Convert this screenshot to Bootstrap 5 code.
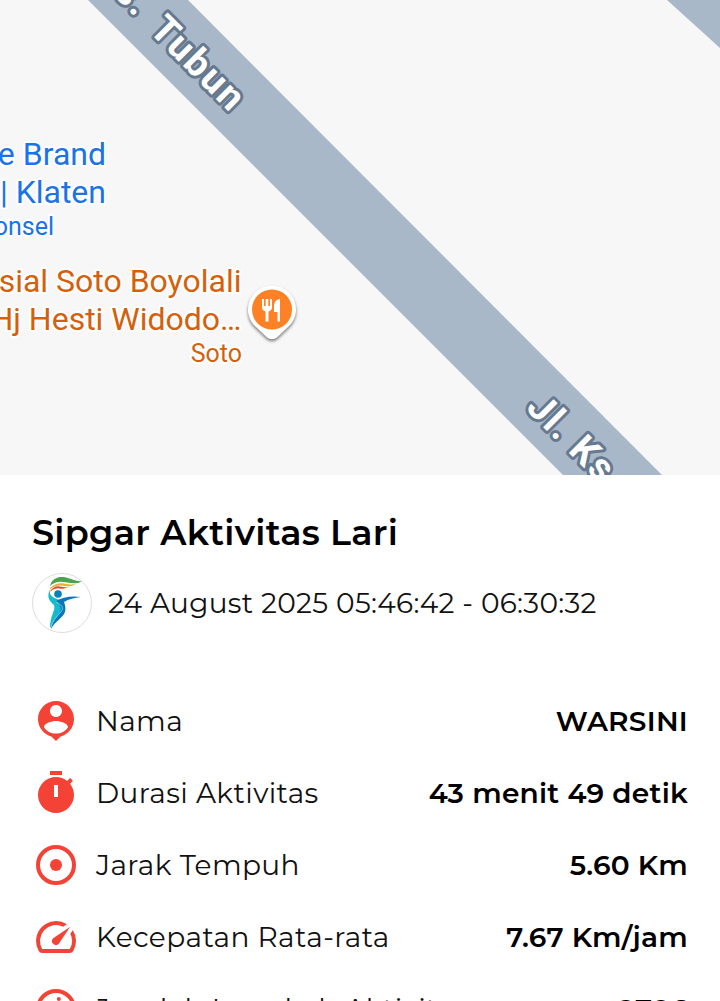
<!DOCTYPE html>
<html lang="id">
<head>
  <meta charset="UTF-8">
  <title>Sipgar Aktivitas Lari</title>
  <meta name="viewport" content="width=device-width, initial-scale=1">
  <!-- Bootstrap 5 -->
  <link href="https://cdn.jsdelivr.net/npm/bootstrap@5.3.0/dist/css/bootstrap.min.css" rel="stylesheet">

  <style>
    body {
      height: 1001px;
      overflow: hidden;
      background: #fff;
      color: #000;
      font-family: Montserrat, Inter, sans-serif;
    }

    .map-area {
      height: 475px;
      background: #f7f7f7;
    }

    .map-area svg text {
      font-family: Roboto, sans-serif;
      paint-order: stroke;
      stroke-linejoin: round;
    }

    .road-name {
      font-weight: 700;
      font-size: 38px;
      letter-spacing: 2px;
      fill: #fff;
      stroke: #66798f;
      stroke-width: 6px;
    }

    .poi {
      font-size: 32px;
      stroke: #fff;
      stroke-width: 4px;
    }

    .poi-sub {
      font-size: 25px;
    }

    .detail {
      padding: 35px 32px 0;
    }

    .activity-title {
      font-size: 35px;
      line-height: 46px;
      font-weight: 600;
      letter-spacing: .3px;
    }

    .activity-info {
      margin-top: 17px;
    }

    .avatar {
      width: 60px;
      height: 60px;
    }

    .activity-time {
      font-size: 28px;
      font-weight: 400;
      line-height: 36px;
      letter-spacing: .3px;
      color: #111;
    }

    .stats {
      margin-top: 52px;
    }

    .stat-row {
      height: 72px;
      font-size: 28px;
      letter-spacing: .25px;
      white-space: nowrap;
    }

    .stat-row svg {
      width: 48px;
      height: 48px;
      fill: #f44336;
      margin-right: 16px;
    }

    .stat-label {
      font-weight: 400;
      letter-spacing: .4px;
      color: #111;
    }

    .stat-value {
      font-weight: 600;
    }
  </style>
</head>
<body>
  <div class="map-area overflow-hidden">
    <svg class="d-block" width="720" height="475" viewBox="0 0 720 475">
      <path d="M88 0H188L662 475H563Z" fill="#a9b8c9"/>
      <path d="M667 0H720V48Z" fill="#a9b8c9"/>

      <text class="road-name" transform="translate(148 31) rotate(45)">Tubun</text>
      <text class="road-name" transform="translate(137 19) rotate(45)" text-anchor="end">Ks.</text>
      <text class="road-name" transform="translate(525 409) rotate(45)">Jl. Ks.</text>

      <g fill="#1a73e8" text-anchor="end">
        <text class="poi" x="106" y="165">Store Brand</text>
        <text class="poi" x="106" y="203">| Klaten</text>
        <text class="poi poi-sub" x="54" y="235">Toko Ponsel</text>
      </g>
      <g fill="#d55f0a" text-anchor="end">
        <text class="poi" x="241.500" y="292">Spesial Soto Boyolali</text>
        <text class="poi" x="241.500" y="330">Hj Hesti Widodo…</text>
        <text class="poi poi-sub" x="242" y="362">Soto</text>
      </g>

      <!-- restaurant pin -->
      <g style="filter: drop-shadow(0 2px 1.5px rgba(0,0,0,.5))">
        <path d="M272 285.500a24 24 0 0 0-24 24c0 8 3.500 13.500 8.500 18l10 9.500q5.500 4.500 11 0l10-9.500c5-4.500 8.500-10 8.500-18a24 24 0 0 0-24-24z" fill="#fff"/>
      </g>
      <circle cx="272" cy="309.500" r="20" fill="#ff8126"/>
      <path d="M262 299h2v7h1.700v-7h2.600v7h1.700v-7h2v8q0 3.500-3.500 4.500v10h-3v-10q-3.500-1-3.500-4.500zM280 299v22.500h-2.500v-9.500h-3.500v-6q0-6 6-7z" fill="#fff"/>
    </svg>
  </div>

  <main class="detail">
    <h1 class="activity-title mb-0">Sipgar Aktivitas Lari</h1>

    <div class="activity-info d-flex align-items-center gap-3">
      <svg class="avatar flex-shrink-0" viewBox="0 0 60 60">
        <circle cx="30" cy="30" r="29.500" fill="#fff" stroke="#ddd"/>
        <path d="M18 13C20 5 27 3 34 4.500c6 1.500 10 3.500 16 4-5 2.500-10 2-15 1-7-1.500-12-1-17 3.500z" fill="#48a54d"/>
        <path d="M18 15q6-6 14-4.500q6 1.500 12 .5q-5 3.500-11 2q-9-2-15 3.500z" fill="#f0ae2e"/>
        <path d="M18 18q5-6 10-4.500q4 1 8 .5q-4 2.500-8 1.500q-5-1-10 3z" fill="#df4636"/>
        <circle cx="26" cy="21" r="3.800" fill="#087fbd"/>
        <path d="M18 16.500c-4 8 0 12 4 15.500 1 2 0 5-1 8-2 5-3 9-3 15l6-9c4-5 8-10 8-14-1-4-4-5-7-6-5-2-8-4-7-9.500z" fill="#12bccd"/>
        <path d="M24 28c7-4 15-5.500 25-4-7 .8-12 2-17 5 1 3 2 6 1 10-3 7-10 9-14 17 1-7 4-10 7-14 4-5 4-8-2-14z" fill="#0878b8"/>
        <path d="M24 29c8 4 8 7 3 12q-5 5-8 12" fill="none" stroke="#a8e4ef" stroke-width=".7"/>
      </svg>
      <div class="activity-time">24 August 2025 05:46:42 - 06:30:32</div>
    </div>

    <div class="stats">
      <div class="stat-row d-flex align-items-center">
        <svg viewBox="0 0 24 24"><path d="M12 2c-4.970 0-9 4.030-9 9 0 4.170 2.840 7.670 6.690 8.690L12 22l2.310-2.310C18.160 18.670 21 15.170 21 11c0-4.970-4.030-9-9-9zm0 2c1.660 0 3 1.340 3 3s-1.340 3-3 3-3-1.340-3-3 1.340-3 3-3zm0 14.300c-2.500 0-4.710-1.280-6-3.220.030-1.990 4-3.080 6-3.080 1.990 0 5.970 1.090 6 3.080-1.290 1.940-3.500 3.220-6 3.220z"/></svg>
        <span class="stat-label">Nama</span>
        <span class="stat-value ms-auto">WARSINI</span>
      </div>
      <div class="stat-row d-flex align-items-center">
        <svg viewBox="0 0 24 24"><path d="M19.030 7.390l1.420-1.420c-.450-.510-.900-.970-1.410-1.410L17.620 5.980C16.070 4.740 14.120 4 12 4c-4.970 0-9 4.030-9 9s4.020 9 9 9 9-4.030 9-9c0-2.110-.740-4.060-1.970-5.610zM13 14h-2V8h2v6zm2-13H9v2h6V1z"/></svg>
        <span class="stat-label">Durasi Aktivitas</span>
        <span class="stat-value ms-auto">43 menit 49 detik</span>
      </div>
      <div class="stat-row d-flex align-items-center">
        <svg viewBox="0 0 24 24"><circle cx="12" cy="12" r="9" fill="none" stroke="#f44336" stroke-width="2"/><circle cx="12" cy="12" r="3"/></svg>
        <span class="stat-label">Jarak Tempuh</span>
        <span class="stat-value ms-auto">5.60 Km</span>
      </div>
      <div class="stat-row d-flex align-items-center">
        <svg viewBox="0 0 24 24"><path d="M20.380 8.570l-1.230 1.850a8 8 0 0 1-.220 7.580H5.070A8 8 0 0 1 15.580 6.850l1.850-1.230A10 10 0 0 0 3.350 19a2 2 0 0 0 1.720 1h13.850a2 2 0 0 0 1.740-1 10 10 0 0 0-.270-10.440zM10.590 15.410a2 2 0 0 0 2.830 0l5.660-8.490-8.490 5.660a2 2 0 0 0 0 2.830z"/></svg>
        <span class="stat-label">Kecepatan Rata-rata</span>
        <span class="stat-value ms-auto">7.67 Km/jam</span>
      </div>
      <div class="stat-row d-flex align-items-center">
        <svg viewBox="0 0 24 24"><circle cx="12" cy="12" r="9" fill="none" stroke="#f44336" stroke-width="2"/><circle cx="13.400" cy="7" r="1"/></svg>
        <span class="stat-label">Jumlah Langkah Aktivitas</span>
        <span class="stat-value ms-auto">2786</span>
      </div>
    </div>
  </main>

  <script src="https://cdn.jsdelivr.net/npm/bootstrap@5.3.0/dist/js/bootstrap.bundle.min.js"></script>
</body>
</html>
